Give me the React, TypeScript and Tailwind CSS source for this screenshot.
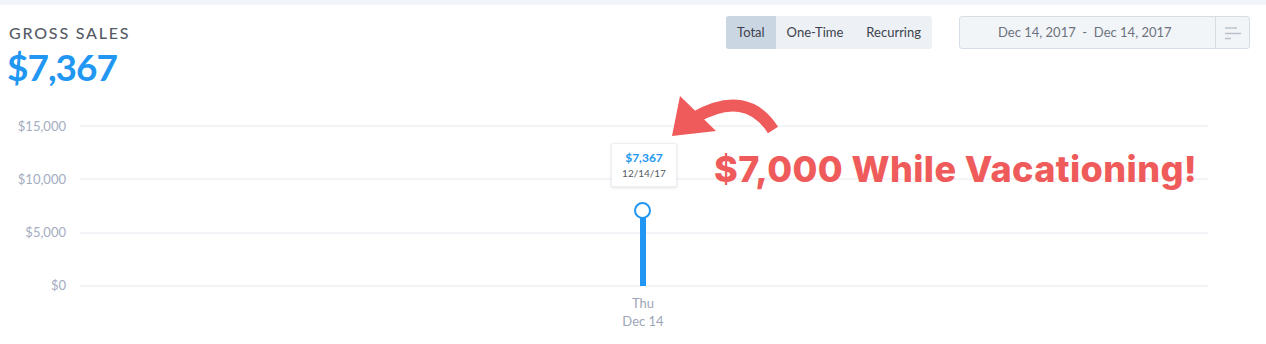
const yLabels = ["$15,000", "$10,000", "$5,000", "$0"];

function Arrow() {
  return (
    <svg width="130" height="60" viewBox="0 0 130 60" className="absolute left-[660px] top-[90px]">
      <path d="M 113 40 Q 86 -2 34 28" fill="none" stroke="#ef5a5a" strokeWidth="12" />
      <polygon points="12,46 20,6 56,41" fill="#ef5a5a" />
    </svg>
  );
}

function MenuIcon() {
  return (
    <svg width="18" height="14" viewBox="0 0 18 14" fill="none" stroke="#b9c2cd" strokeWidth="1.5">
      <line x1="1" y1="2" x2="13" y2="2" />
      <line x1="1" y1="7.5" x2="17" y2="7.5" />
      <line x1="1" y1="12.5" x2="7" y2="12.5" />
    </svg>
  );
}

export default function App() {
  return (
    <div className="relative w-[1266px] h-[344px] overflow-hidden bg-white font-['Lato',sans-serif]">
      <div className="h-[5px] bg-[#f1f4f8]" />
      <div className="flex justify-between pl-[9px] pr-[16px]">
        <div className="pt-[18px]">
          <p className="text-[16px] leading-[20px] tracking-[1.8px] font-medium text-[#555b65]">GROSS SALES</p>
          <p className="-ml-[2px] text-[37px] leading-[46px] font-bold tracking-[-1px] text-[#2196f3] mt-[1px]">$7,367</p>
        </div>
        <div className="flex items-start gap-[27px] pt-[11px]">
          <div className="flex h-[33px] rounded-[3px] bg-[#edf1f5] text-[13px] text-[#3c414b]">
            <button type="button" className="px-[11px] rounded-l-[3px] bg-[#cad7e3]">Total</button>
            <button type="button" className="px-[11px]">One-Time</button>
            <button type="button" className="pl-[12px] pr-[11px]">Recurring</button>
          </div>
          <div className="flex h-[33px] w-[291px] rounded-[3px] border border-[#d6dde5] bg-[#f2f5f8]">
            <div className="flex-1 flex items-center pl-[38px] text-[13px] text-[#6c727d]">
              Dec 14, 2017&nbsp; - &nbsp;Dec 14, 2017
            </div>
            <div className="w-[34px] flex items-center justify-center border-l border-[#d6dde5] pl-[1px]">
              <MenuIcon />
            </div>
          </div>
        </div>
      </div>

      <div className="flex flex-col gap-[51.3px] mt-[35px]">
        {yLabels.map((l) => (
          <div key={l} className="flex items-center h-[2px]">
            <span className="w-[66px] text-right text-[13px] text-[#a4acbf] leading-none">{l}</span>
            <div className="ml-[14px] w-[1128px] h-[2px] bg-[#f2f4f7]" />
          </div>
        ))}
      </div>

      <div className="absolute left-[640px] top-[214px] w-[6px] h-[72px] bg-[#2196f3]" />
      <div className="absolute left-[634px] top-[202px] w-[17px] h-[17px] rounded-full border-[2.5px] border-[#2196f3] bg-white" />

      <div className="absolute left-[611px] top-[143px] w-[66px] h-[44px] rounded-[2px] border border-[#eceff3] bg-white shadow-[0_1px_3px_rgba(0,0,0,0.12)] flex flex-col items-center justify-center">
        <span className="text-[12px] leading-[15px] font-bold text-[#2196f3]">$7,367</span>
        <span className="text-[10px] leading-[14px] text-[#555b65] mt-[1px]">12/14/17</span>
      </div>

      <div className="absolute left-[613px] top-[294px] w-[60px] flex flex-col items-center text-[13px] leading-[18px] text-[#9ca5b7]">
        <span>Thu</span>
        <span>Dec 14</span>
      </div>

      <Arrow />
      <p className="absolute left-[714px] top-[147px] font-['Inter',sans-serif] text-[36px] leading-[44px] font-extrabold text-[#ef5a5a] tracking-[0.4px]">
        $7,000 While Vacationing!
      </p>
    </div>
  );
}
